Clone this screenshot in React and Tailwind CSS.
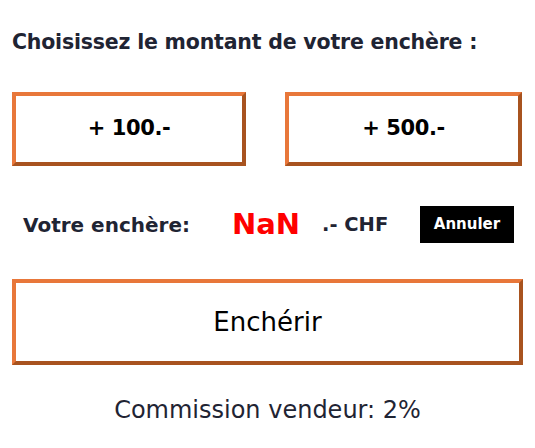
export default function App() {
  const bid = NaN;
  return (
    <div className="w-[535px] h-[448px] bg-white px-3 pt-[30px] font-['DejaVu_Sans',sans-serif] text-[#1f2433]">
      <h3 className="text-[20.5px] font-bold leading-6 tracking-[-0.2px]">Choisissez le montant de votre enchère :</h3>

      {/* quick amounts */}
      <div className="mt-[38px] grid grid-cols-[234px_237px] gap-[39px]">
        {["+ 100.-", "+ 500.-"].map((t) => (
          <button
            key={t}
            className="h-[74px] bg-white border-4 border-t-[#e8773a] border-l-[#e8773a] border-b-[#a8531f] border-r-[#a8531f] text-black text-[21px] font-bold tracking-[-0.4px]"
          >
            {t}
          </button>
        ))}
      </div>

      {/* current bid */}
      <div className="mt-[40px] flex items-center h-[37px]">
        <span className="ml-[11px] w-[209px] text-[20px] font-bold">Votre enchère:</span>
        <span className="w-[90px] text-[29px] font-bold text-[#ff0000]">{String(bid)}</span>
        <span className="w-[98px] text-[19.5px] font-bold">.- CHF</span>
        <button className="h-[37px] w-[94px] bg-black text-white text-[15px] font-bold">Annuler</button>
      </div>

      <button className="mt-[36px] w-full h-[86px] bg-white border-4 border-t-[#e8773a] border-l-[#e8773a] border-b-[#a8531f] border-r-[#a8531f] text-black text-[26px]">
        Enchérir
      </button>

      <p className="mt-[27px] text-center text-[24px]">Commission vendeur: 2%</p>
    </div>
  );
}
